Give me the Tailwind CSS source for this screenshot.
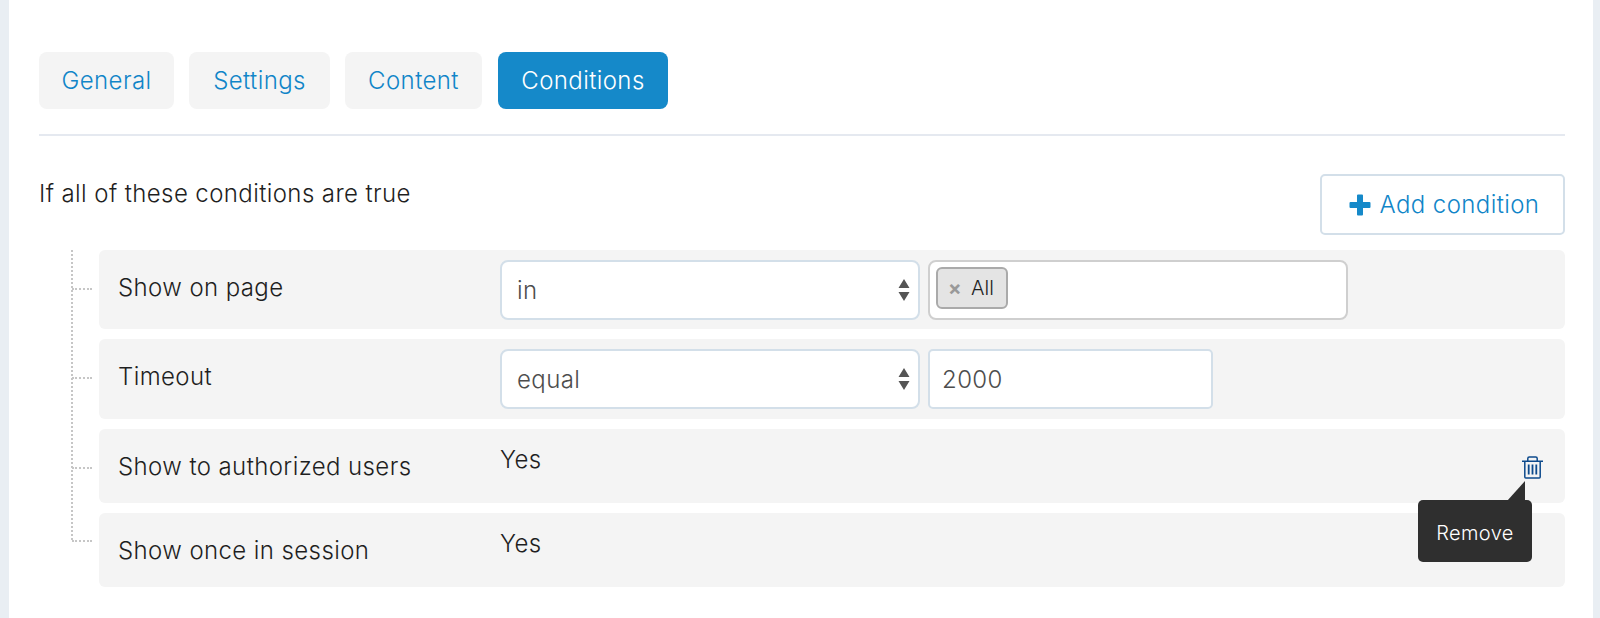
<!doctype html>
<html>
<head>
<meta charset="utf-8">
<script src="https://cdn.jsdelivr.net/npm/@tailwindcss/browser@4"></script>
</head>
<body class="bg-white">
<div class="w-[1600px] h-[618px] overflow-hidden border-l-[9px] border-r-[7px] border-[#e9eef3] bg-white font-['Inter',sans-serif] font-[350] text-[24px] tracking-[0.4px] text-[#1f1f1f] pl-[30px] pr-[28px] pt-[52px]">
  <nav class="flex gap-[15px] h-[57px] text-[#1085c8]">
    <a class="flex items-center justify-center w-[135px] rounded-[8px] bg-[#f4f4f4]">General</a>
    <a class="flex items-center justify-center w-[141px] rounded-[8px] bg-[#f4f4f4]">Settings</a>
    <a class="flex items-center justify-center w-[137px] rounded-[8px] bg-[#f4f4f4]">Content</a>
    <a class="flex items-center justify-center w-[170px] ml-[1px] rounded-[8px] bg-[#1589c9] text-white">Conditions</a>
  </nav>
  <div class="mt-[25px] border-t-2 border-[#e5e9f0]"></div>
  <div class="mt-[38px] flex justify-between items-start h-[61px]">
    <span class="mt-[3px] leading-[34px]">If all of these conditions are true</span>
    <button class="flex items-center justify-center gap-[9px] w-[245px] h-[61px] rounded-[5px] border-2 border-[#d3dfe9] bg-white pl-[3px] text-[#1085c8]">
      <svg width="22" height="22" viewBox="0 0 22 22"><path d="M8 1.500a1 1 0 0 1 1-1h4a1 1 0 0 1 1 1V8h6.500a1 1 0 0 1 1 1v4a1 1 0 0 1-1 1H14v6.500a1 1 0 0 1-1 1H9a1 1 0 0 1-1-1V14H1.500a1 1 0 0 1-1-1V9a1 1 0 0 1 1-1H8z" fill="#1589c9"/></svg>
      Add condition
    </button>
  </div>
  <div class="relative mt-[15px] ml-[60px] flex flex-col gap-[10px]">
    <div class="absolute left-[-28px] top-0 h-[290px] border-l-2 border-dotted border-[#c6c6c6]"></div>

    <div class="relative flex items-center h-[79px] rounded-[6px] bg-[#f4f4f4] pl-[19px]">
      <div class="absolute left-[-27px] top-[38px] w-[20px] border-t-2 border-dotted border-[#c6c6c6]"></div>
      <span class="w-[382px] mb-[4px]">Show on page</span>
      <div class="relative flex items-center w-[420px] h-[60px] rounded-[8px] border-2 border-[#d3dfe9] bg-white pl-[15px] pt-[2px] text-[#4d4d4d]">
        in
        <svg class="absolute right-[8px] top-[16px]" width="12" height="24" viewBox="0 0 12 24"><path d="M6 1l5.500 9H.5zM.5 14h11L6 23z" fill="#555"/></svg>
      </div>
      <div class="ml-[8px] flex items-start pt-[5px] w-[420px] h-[60px] rounded-[8px] border-2 border-[#cfcfcf] bg-white pl-[6px]">
        <span class="flex items-center h-[42px] w-[72px] rounded-[6px] border-2 border-[#aaaaaa] bg-[#e4e4e4] pl-[10px] text-[20px] tracking-normal">
          <span class="text-[#999] w-[23px] font-bold">×</span>All
        </span>
      </div>
    </div>

    <div class="relative flex items-center h-[80px] rounded-[6px] bg-[#f4f4f4] pl-[19px]">
      <div class="absolute left-[-27px] top-[38px] w-[20px] border-t-2 border-dotted border-[#c6c6c6]"></div>
      <span class="w-[382px] mb-[4px]">Timeout</span>
      <div class="relative flex items-center w-[420px] h-[60px] rounded-[8px] border-2 border-[#d3dfe9] bg-white pl-[15px] pt-[2px] text-[#4d4d4d]">
        equal
        <svg class="absolute right-[8px] top-[16px]" width="12" height="24" viewBox="0 0 12 24"><path d="M6 1l5.500 9H.5zM.5 14h11L6 23z" fill="#555"/></svg>
      </div>
      <div class="ml-[8px] flex items-center w-[285px] h-[60px] rounded-[5px] border-2 border-[#d3dfe9] bg-white pl-[12px] pt-[2px] text-[#4d4d4d]">2000</div>
    </div>

    <div class="relative flex h-[74px] rounded-[6px] bg-[#f4f4f4] pl-[19px]">
      <div class="absolute left-[-27px] top-[38px] w-[20px] border-t-2 border-dotted border-[#c6c6c6]"></div>
      <span class="w-[382px] mt-[20px]">Show to authorized users</span>
      <span class="mt-[13px]">Yes</span>
      <svg class="absolute left-[1423px] top-[27px]" width="21" height="23" viewBox="0 0 21 23" fill="none" stroke="#0d4a8c" stroke-width="1.500"><path d="M0 5.200h21M2.800 5.200v15.800a1 1 0 0 0 1 1h13.400a1 1 0 0 0 1-1V5.200M5.800 5.200V2.500a1.500 1.500 0 0 1 1.500-1.500h6.400a1.500 1.500 0 0 1 1.500 1.500v2.700"/><path d="M6.700 8.500v10M10.500 8.500v10M14.300 8.500v10" stroke-width="1.800"/></svg>
    </div>

    <div class="relative flex h-[74px] rounded-[6px] bg-[#f4f4f4] pl-[19px]">
      <div class="absolute left-[-27px] top-[27px] w-[20px] border-t-2 border-dotted border-[#c6c6c6]"></div>
      <span class="w-[382px] mt-[20px]">Show once in session</span>
      <span class="mt-[13px]">Yes</span>
      <div class="absolute left-[1319px] top-[-13px] flex items-center justify-center w-[114px] h-[62px] rounded-[5px] bg-[#2f2f2f] pt-[3px] text-[20px] text-white">
        Remove
        <svg class="absolute left-[89px] top-[-19px]" width="19" height="20" viewBox="0 0 19 20"><path d="M0 20L18 0v20z" fill="#2f2f2f"/></svg>
      </div>
    </div>
  </div>
</div>
</body>
</html>
